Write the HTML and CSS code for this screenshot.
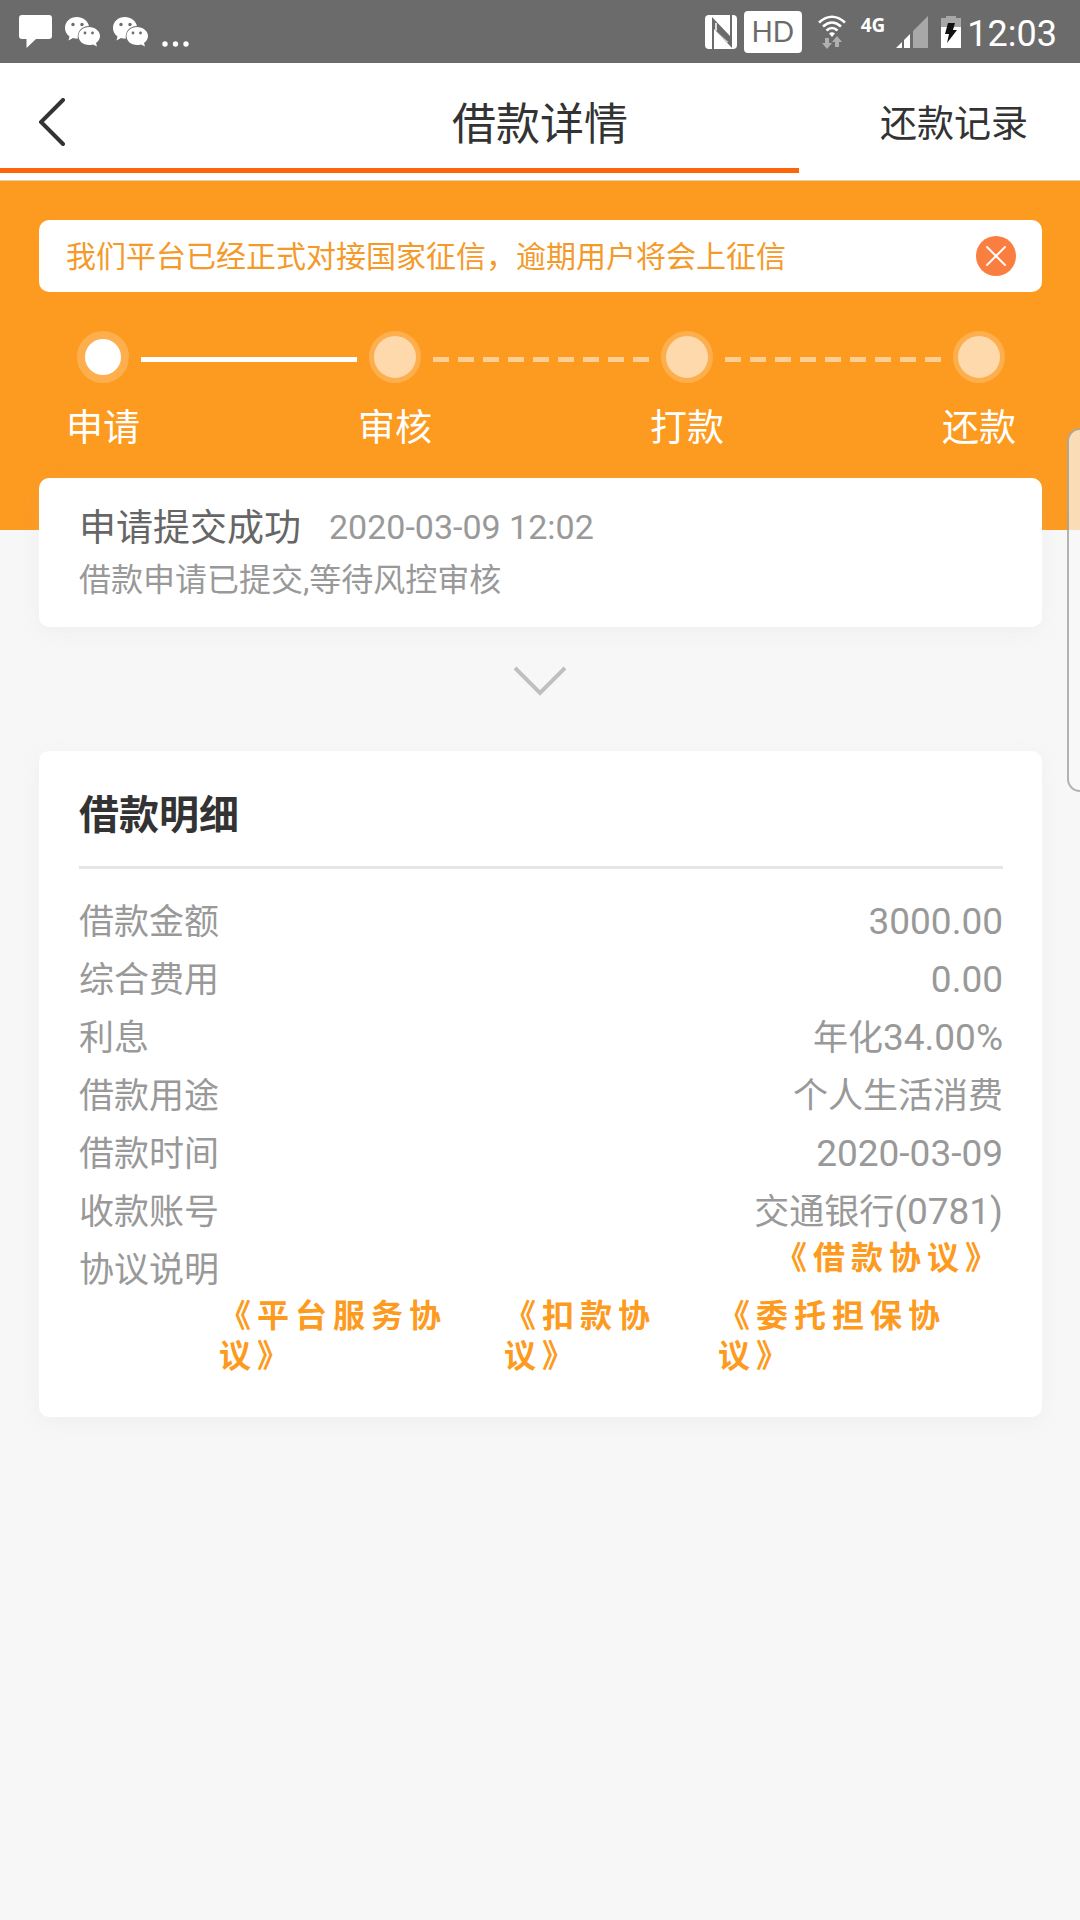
FILE: index.html
```
<!DOCTYPE html>
<html lang="zh-CN">
<head>
<meta charset="utf-8">
<meta name="viewport" content="width=device-width, initial-scale=1">
<title>借款详情</title>
<link rel="stylesheet" href="styles.css">
</head>
<body>
<div class="status-bar">
  <div class="status-left">
    <svg width="33" height="33" viewBox="0 0 33 33" aria-hidden="true"><path fill="#fff" d="M3 0h27q3 0 3 3v18q0 3-3 3H17L7.500 33V24H3q-3 0-3-3V3q0-3 3-3z"/></svg>
    <svg width="35" height="30" viewBox="0 0 35 30" aria-hidden="true"><use href="#wechat"/></svg>
    <svg width="35" height="30" viewBox="0 0 35 30" aria-hidden="true"><use href="#wechat"/></svg>
    <svg width="28" height="30" viewBox="0 0 28 30" aria-hidden="true"><g fill="#fff"><circle cx="4" cy="27" r="2.700"/><circle cx="14.500" cy="27" r="2.700"/><circle cx="25" cy="27" r="2.700"/></g></svg>
  </div>
  <div class="status-right">
    <svg width="32" height="34" viewBox="0 0 32 34" aria-hidden="true"><rect width="32" height="34" rx="4" fill="#fff"/><path d="M7 2L25 21V0h2V33L9 14V34H7z" fill="#6b6b6b"/><path d="M11 8V15L23 27" fill="none" stroke="#fff" stroke-width="1.500"/><path d="M12 15L24 26" fill="none" stroke="#6b6b6b" stroke-width="2.500"/></svg>
    <span class="hd">HD</span>
    <svg class="wifi" width="28" height="34" viewBox="0 0 28 34" aria-hidden="true"><g fill="none" stroke="#fff" stroke-width="2.600"><path d="M1 7.500Q14-4 27 7.500"/><path d="M5 11.500Q14 3.500 23 11.500"/><path d="M8.500 15.500Q14 10.500 19.500 15.500"/></g><path fill="#fff" d="M11 18.500Q14 16 17 18.500L14 22z"/><path fill="#b0b0b0" d="M7 23h4v5h3l-5 6-5-6h3zM17 32h4v-5h3l-5-6-5 6h3z"/></svg>
    <span class="net">4G</span>
    <svg width="32" height="32" viewBox="0 0 32 32" aria-hidden="true"><path fill="#fff" d="M0 32L6 26V32zM8 32V24L14 18V32z"/><path fill="#a8a8a8" d="M17 32V15L32 0V32z"/></svg>
    <svg class="battery" width="20" height="32" viewBox="0 0 20 32" aria-hidden="true"><path fill="#a8a8a8" d="M0 2h5V0h10v2h5v9H0z"/><path fill="#fff" d="M0 11h20v21H0z"/><path fill="#111" d="M7 7h7l-2 7h4L6 27l2-9H4z"/></svg>
    <span class="clock">12:03</span>
  </div>
</div>
<svg class="defs" aria-hidden="true"><defs><g id="wechat"><path fill="#fff" d="M12 0C5 0 0 4.800 0 11c0 3.500 1.600 6.400 4.500 8.500L3.500 23.500 8 21c1.500.5 3 .7 4.800.7C12 14 17 9 24 9 22.500 3.500 18 0 12 0z"/><path fill="#fff" d="M24 10c-6 0-10.500 4-10.500 9S18 28 24 28c1.500 0 2.700-.2 4-.6L32 29.500 31 26c2.400-1.700 4-4 4-7 0-5-5-9-11-9z"/><g fill="#6b6b6b"><circle cx="8" cy="7.500" r="1.700"/><circle cx="17" cy="7.500" r="1.700"/><circle cx="20" cy="16" r="1.400"/><circle cx="27.500" cy="16" r="1.400"/></g></g></defs></svg>

<header class="nav">
  <button class="back" type="button" aria-label="返回"><svg width="28" height="48" viewBox="0 0 28 48" aria-hidden="true"><path d="M24 2L2 24L24 46" fill="none" stroke="#333" stroke-width="4" stroke-linecap="round"/></svg></button>
  <h1>借款详情</h1>
  <a class="records" href="#records">还款记录</a>
  <div class="load-bar"></div>
</header>

<main>
  <section class="hero">
    <div class="notice">
      <p>我们平台已经正式对接国家征信，逾期用户将会上征信</p>
      <button class="close" type="button" aria-label="关闭"><svg width="40" height="40" viewBox="0 0 40 40" aria-hidden="true"><circle cx="20" cy="20" r="20" fill="#fb7e41"/><path d="M11 11L29 29M29 11L11 29" stroke="#fff" stroke-width="2" stroke-linecap="round"/></svg></button>
    </div>
    <ol class="steps">
      <li class="step done"><span class="dot"></span>申请</li>
      <li class="line solid" aria-hidden="true"></li>
      <li class="step"><span class="dot"></span>审核</li>
      <li class="line" aria-hidden="true"></li>
      <li class="step"><span class="dot"></span>打款</li>
      <li class="line" aria-hidden="true"></li>
      <li class="step"><span class="dot"></span>还款</li>
    </ol>
  </section>

  <section class="card progress">
    <div class="progress-head"><h2>申请提交成功</h2><time>2020-03-09 12:02</time></div>
    <p>借款申请已提交,等待风控审核</p>
  </section>

  <button class="expand" type="button" aria-label="展开"><svg width="52" height="30" viewBox="0 0 52 30" aria-hidden="true"><path d="M1 2L26 27L51 2" fill="none" stroke="#bfbfbf" stroke-width="4"/></svg></button>

  <section class="card detail">
    <h2>借款明细</h2>
    <dl>
      <div class="row"><dt>借款金额</dt><dd><span class="num">3000.00</span></dd></div>
      <div class="row"><dt>综合费用</dt><dd><span class="num">0.00</span></dd></div>
      <div class="row"><dt>利息</dt><dd>年化<span class="num">34.00%</span></dd></div>
      <div class="row"><dt>借款用途</dt><dd>个人生活消费</dd></div>
      <div class="row"><dt>借款时间</dt><dd><span class="num">2020-03-09</span></dd></div>
      <div class="row"><dt>收款账号</dt><dd>交通银行<span class="num">(0781)</span></dd></div>
      <div class="row"><dt>协议说明</dt>
        <dd class="agreements">
          <a class="main-link" href="#loan">《借款协议》</a>
          <div class="more-links">
            <a href="#service">《平台服务协议》</a>
            <a href="#debit">《扣款协议》</a>
            <a href="#guarantee">《委托担保协议》</a>
          </div>
        </dd>
      </div>
    </dl>
  </section>
</main>
<div class="edge-panel" aria-hidden="true"></div>
</body>
</html>
```
FILE: styles.css
```
* { box-sizing: border-box; margin: 0; padding: 0; }
body {
  min-height: 100vh;
  background: #f7f7f7;
  color: #333;
  font-family: Roboto, "Noto Sans CJK SC", sans-serif;
  text-spacing-trim: space-all;
  overflow-x: hidden;
  position: relative;
}
button { border: 0; background: none; cursor: pointer; display: block; }
a { color: inherit; text-decoration: none; }
svg { display: block; flex: none; }
.defs { position: absolute; width: 0; height: 0; }

.status-bar {
  display: flex;
  justify-content: space-between;
  height: 63px;
  padding: 0 23px 0 19px;
  background: #6b6b6b;
  color: #fff;
}
.status-left, .status-right { display: flex; align-items: center; }
.status-left { gap: 13px; }
.hd {
  width: 58px;
  height: 42px;
  margin-left: 7px;
  border-radius: 4px;
  background: #fff;
  color: #6b6b6b;
  font: 28px/40px Lato, sans-serif;
  text-align: center;
}
.wifi { margin-left: 16px; }
.net {
  margin: 0 11px 14px 15px;
  font: bold 19px/24px "Noto Sans", sans-serif;
}
.battery { margin: 0 6px 0 13px; }
.clock { padding-top: 4px; font-size: 36px; line-height: 60px; }

.nav {
  position: relative;
  display: grid;
  grid-template-columns: 1fr auto 1fr;
  align-items: center;
  height: 118px;
  padding: 0 39px;
  border-bottom: 1px solid #e3cfae;
  background: #fff;
}
.back { justify-self: start; }
.nav h1 { padding-top: 6px; font-size: 44px; font-weight: 400; line-height: 64px; }
.records { justify-self: end; padding: 6px 13px 0 0; font-size: 37px; line-height: 56px; }
.load-bar {
  position: absolute;
  left: 0;
  bottom: 7px;
  width: 74%;
  height: 5px;
  background: #fc6509;
}

.hero { min-height: 349px; padding: 39px 38px 0 39px; background: #fd9a20; }
.notice {
  display: flex;
  align-items: center;
  justify-content: space-between;
  min-height: 72px;
  padding: 0 26px 0 27px;
  border-radius: 10px;
  background: #fff;
  color: #f49a2a;
  font-size: 30px;
  line-height: 44px;
}
.notice p { padding-top: 2px; }
.steps {
  display: flex;
  gap: 1px;
  margin-top: 39px;
  padding: 0 26px 0 27px;
  list-style: none;
}
.step {
  display: flex;
  flex-direction: column;
  align-items: center;
  gap: 18px;
  width: 74px;
  color: #fff;
  font-size: 37px;
  line-height: 56px;
  white-space: nowrap;
}
.dot {
  width: 52px;
  height: 52px;
  border: 5px solid #fdae4d;
  border-radius: 50%;
  background: #fed9ac;
}
.done .dot { border-width: 8px; background: #fff; }
.line {
  flex: 1;
  height: 5px;
  margin-top: 26px;
  background: repeating-linear-gradient(90deg, #fecf94 0 16px, transparent 16px 25px);
}
.line.solid { background: #fff; }

.card {
  margin: 0 38px 0 39px;
  padding: 0 39px 0 40px;
  border-radius: 10px;
  background: #fff;
  box-shadow: 0 6px 20px rgba(190, 190, 190, 0.12);
}
.progress {
  position: relative;
  margin-top: -52px;
  padding-top: 23px;
  padding-bottom: 24px;
  color: #999;
}
.progress-head { display: flex; align-items: center; gap: 28px; }
.progress h2 { color: #666; font-size: 37px; font-weight: 400; line-height: 56px; }
.progress time { padding-bottom: 4px; font-size: 34px; }
.progress p { font-size: 32px; line-height: 46px; }

.expand { margin: 39px auto 55px; }

.detail { padding-bottom: 41px; }
.detail h2 {
  padding: 36px 0 21px;
  border-bottom: 3px solid #e6e6e6;
  font-size: 40px;
  line-height: 58px;
}
.detail dl { padding-top: 25px; color: #999; font-size: 35px; line-height: 58px; }
.row { display: flex; }
.row dt { flex: none; }
.row dd { flex: 1; text-align: right; }
.num { font-size: 37px; line-height: 1; }
.agreements {
  display: flex;
  flex-direction: column;
  gap: 22px;
  color: #fd9a20;
  font-size: 32px;
  font-weight: 700;
  letter-spacing: 6px;
  line-height: 40px;
}
.agreements .main-link { line-height: 32px; }
.more-links { display: flex; text-align: left; }

.edge-panel {
  position: absolute;
  top: 428px;
  right: 0;
  width: 13px;
  height: 364px;
  border: 2px solid rgba(110, 110, 110, 0.5);
  border-right: 0;
  border-radius: 18px 0 0 18px;
  background: rgba(248, 248, 248, 0.7);
}
```
